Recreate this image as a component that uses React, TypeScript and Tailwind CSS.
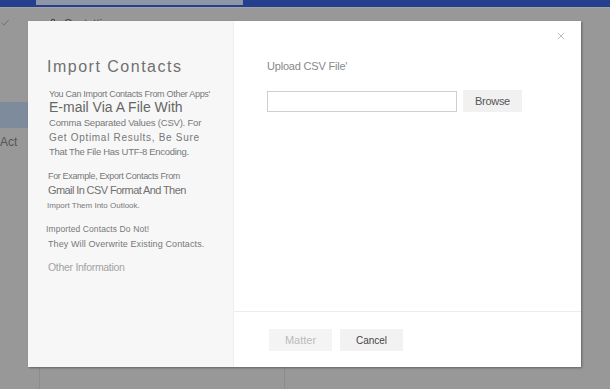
import { X, User, Check, ChevronDown } from "lucide-react";

export default function App() {
  return (
    <div className="relative w-[610px] h-[389px] overflow-hidden bg-[#989898] font-['Liberation_Sans',Arial,sans-serif]">
      {/* dimmed page behind the dialog */}
      <div className="h-[7px] bg-[#233f8d] flex">
        <div className="ml-[36px] w-[207px] h-[5px] bg-[#8f96a6]" />
      </div>
      <div className="h-[28px] border-t border-[#a3a3a3] flex items-center pt-[3px] text-[#555]">
        <Check className="w-[10px] h-[10px] text-[#666]" strokeWidth={2} />
        <User className="w-[10px] h-[10px] ml-[38px] text-[#444]" strokeWidth={2.5} />
        <span className="ml-[6px] text-[11px] text-[#444]">Contatti</span>
        <ChevronDown className="w-[9px] h-[9px] ml-[3px] text-[#444]" />
      </div>
      <div className="flex h-[354px]">
        <div className="w-[40px] border-r border-[#8c8c8c] flex flex-col">
          <div className="h-[67px]" />
          <div className="h-[26px] bg-[#7d8b9c]" />
          <div className="mt-[5px] text-[12px] text-[#555]">Act</div>
        </div>
        <div className="w-[245px] border-r border-[#8c8c8c]" />
      </div>

      {/* dialog */}
      <div className="absolute left-[28px] top-[21px] w-[553px] h-[346px] flex bg-white shadow-[1px_1px_2px_rgba(0,0,0,0.35)]">
        <div className="w-[206px] bg-[#f7f7f7] border-r border-[#efefef] pl-[19px] pt-[36px] text-[#777]">
          <div className="text-[16px] tracking-[1.5px] text-[#707070] leading-[20px]">Import Contacts</div>
          <div className="mt-[11px] text-[9px] tracking-[-0.3px] leading-[12px] text-[#777] pl-[2px]">You Can Import Contacts From Other Apps'</div>
          <div className="text-[14px] tracking-[0px] leading-[15px] text-[#666] pl-[2px]">E-mail Via A File With</div>
          <div className="mt-[1px] text-[9.5px] tracking-[-0.2px] leading-[14px] pl-[2px]">Comma Separated Values (CSV). For</div>
          <div className="text-[10px] tracking-[0.7px] leading-[15px] pl-[2px]">Get Optimal Results, Be Sure</div>
          <div className="text-[9.5px] tracking-[-0.3px] leading-[14px] pl-[2px]">That The File Has UTF-8 Encoding.</div>
          <div className="mt-[11px] text-[9px] tracking-[-0.35px] leading-[13px] pl-[1px]">For Example, Export Contacts From</div>
          <div className="text-[11px] tracking-[-0.6px] leading-[15px] pl-[1px] text-[#707070]">Gmail In CSV Format And Then</div>
          <div className="mt-[1px] text-[8px] tracking-[0px] leading-[14px]">Import Them Into Outlook.</div>
          <div className="mt-[10px] text-[8.5px] tracking-[0.1px] leading-[13px] -ml-[1px]">Imported Contacts Do Not!</div>
          <div className="mt-[1px] text-[9px] tracking-[0.1px] leading-[14px] pl-[1px]">They Will Overwrite Existing Contacts.</div>
          <div className="mt-[9px] text-[10.5px] tracking-[-0.3px] leading-[14px] text-[#a3a3a3] pl-[1px]">Other Information</div>
        </div>
        <div className="flex-1 flex flex-col relative">
          <button className="absolute right-[14px] top-[9px] text-[#aaa]">
            <X className="w-[12px] h-[12px]" strokeWidth={1.5} />
          </button>
          <div className="flex-1 pl-[33px] pt-[38px]">
            <div className="text-[11px] text-[#888] leading-[14px] tracking-[-0.2px]">Upload CSV File'</div>
            <div className="mt-[17px] flex items-center gap-[6px]">
              <div className="w-[190px] h-[21px] border border-[#cfcfcf] bg-white" />
              <div className="w-[59px] h-[22px] bg-[#f1f1f1] flex items-center justify-center text-[11px] text-[#555] tracking-[-0.3px]">Browse</div>
            </div>
          </div>
          <div className="h-[56px] border-t border-[#ececec] flex items-start gap-[8px] pl-[35px] pt-[17px]">
            <div className="w-[63px] h-[22px] bg-[#f4f4f4] flex items-center justify-center text-[11px] text-[#bbb]">Matter</div>
            <div className="w-[63px] h-[22px] bg-[#f2f2f2] flex items-center justify-center text-[10px] text-[#444]">Cancel</div>
          </div>
        </div>
      </div>
    </div>
  );
}
